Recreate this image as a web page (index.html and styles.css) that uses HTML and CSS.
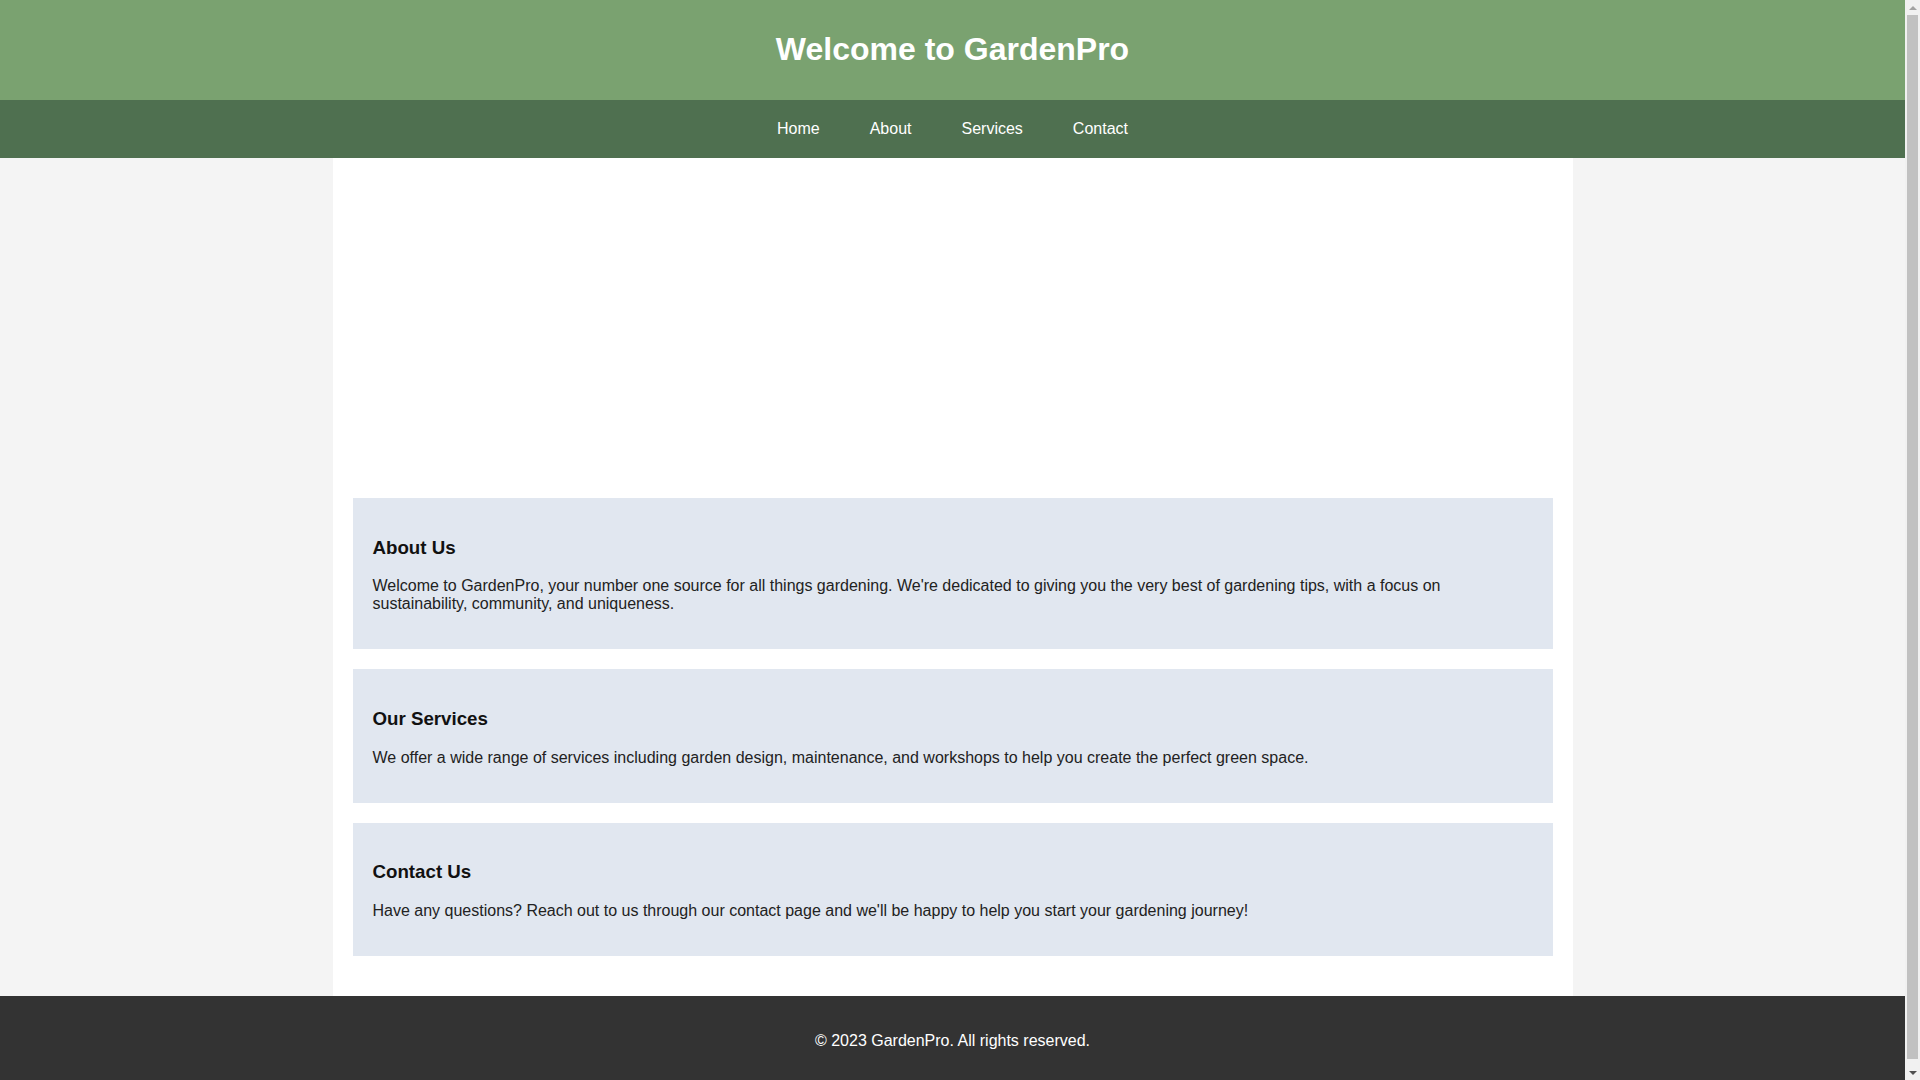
FILE: index.html
```html
<!DOCTYPE html>
<html lang="en">
<head>
<meta charset="UTF-8">
<title>GardenPro</title>
<link rel="stylesheet" href="styles.css">
</head>
<body>
<div class="page">
  <header class="site-header">
    <h1 class="site-title">Welcome to GardenPro</h1>
  </header>
  <nav class="site-nav">
    <a href="#" class="nav-link">Home</a>
    <a href="#" class="nav-link">About</a>
    <a href="#" class="nav-link">Services</a>
    <a href="#" class="nav-link">Contact</a>
  </nav>
  <main class="container">
    <div class="hero"></div>
    <section class="card">
      <h2 class="card-title">About Us</h2>
      <p class="card-text">Welcome to GardenPro, your number one source for all things gardening. We're dedicated to giving you the very best of gardening tips, with a focus on sustainability, community, and uniqueness.</p>
    </section>
    <section class="card">
      <h2 class="card-title">Our Services</h2>
      <p class="card-text">We offer a wide range of services including garden design, maintenance, and workshops to help you create the perfect green space.</p>
    </section>
    <section class="card">
      <h2 class="card-title">Contact Us</h2>
      <p class="card-text">Have any questions? Reach out to us through our contact page and we'll be happy to help you start your gardening journey!</p>
    </section>
  </main>
  <footer class="site-footer">
    <p class="footer-text">&copy; 2023 GardenPro. All rights reserved.</p>
  </footer>
</div>
<div class="scrollbar" aria-hidden="true">
  <span class="scroll-arrow scroll-up"></span>
  <span class="scroll-thumb"></span>
  <span class="scroll-arrow scroll-down"></span>
</div>
</body>
</html>
```

FILE: styles.css
```css
html, body {
  margin: 0;
  padding: 0;
}
body {
  font-family: "Liberation Sans", Arial, sans-serif;
  font-size: 16px;
  background: #f4f4f4;
  color: #222;
}
.page {
  margin-right: 15px;
}
.site-header {
  background: #7aa270;
  color: #fff;
  text-align: center;
  padding: 10px 0;
}
.site-title {
  margin: 21.44px 0;
  font-size: 32px;
  font-weight: bold;
}
.site-nav {
  background: #4f7050;
  display: flex;
  justify-content: center;
  gap: 50px;
  padding: 20px 0;
}
.nav-link {
  color: #fff;
  text-decoration: none;
  font-size: 16px;
  line-height: 18px;
}
.container {
  max-width: 1200px;
  margin: 0 auto;
  padding: 20px;
  background: #fff;
}
.hero {
  height: 300px;
  margin-bottom: 20px;
}
.card {
  background: #e1e7f0;
  padding: 20px;
  margin-bottom: 20px;
}
.card-title {
  font-size: 18.72px;
  margin: 18.72px 0;
  color: #111;
}
.card-text {
  margin: 16px 0;
}
.site-footer {
  background: #333;
  color: #fff;
  text-align: center;
  padding: 20px 0;
}
.footer-text {
  margin: 16px 0;
}

/* drawn browser scrollbar, overlaying the right edge */
.scrollbar {
  position: fixed;
  top: 0;
  right: 0;
  width: 15px;
  height: 100vh;
  background: #f1f1f1;
  display: flex;
  flex-direction: column;
  align-items: center;
}
.scroll-arrow {
  width: 15px;
  height: 15px;
  display: flex;
  align-items: center;
  justify-content: center;
  flex: none;
}
.scroll-arrow::before {
  content: "";
  width: 0;
  height: 0;
  border-left: 4px solid transparent;
  border-right: 4px solid transparent;
}
.scroll-up::before {
  border-bottom: 4px solid #a3a3a3;
}
.scroll-down::before {
  border-top: 4px solid #505050;
}
.scroll-thumb {
  flex: 1;
  width: 11px;
  margin-bottom: 6px;
  background: #c1c1c1;
}
```
